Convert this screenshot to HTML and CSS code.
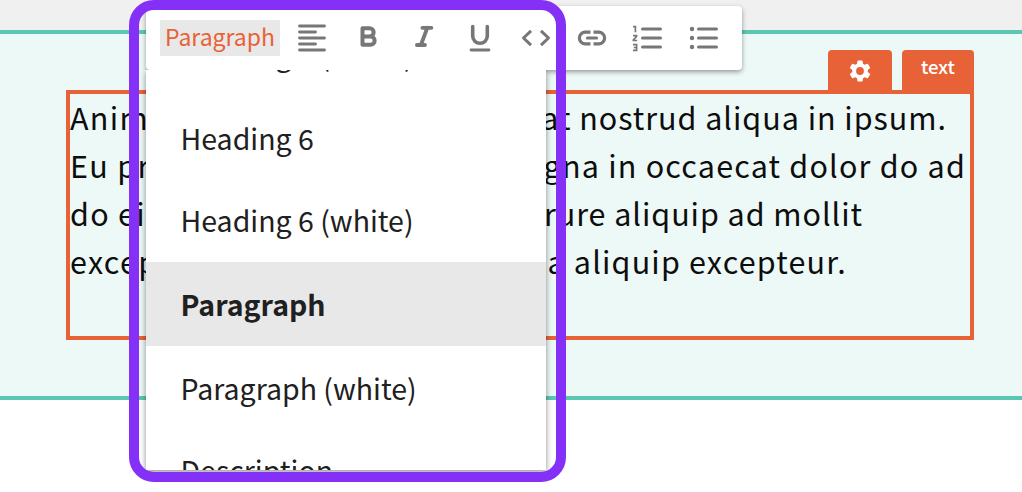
FILE: index.html
```html
<!DOCTYPE html>
<html lang="en">
<head>
<meta charset="utf-8">
<title>Text editor</title>
<link rel="stylesheet" href="styles.css">
</head>
<body>
<main class="page">
  <section class="section">
    <div class="tabs">
      <div class="tab tab-settings">
        <svg width="26" height="26" viewBox="0 0 24 24" fill="#fff"><path d="M19.14 12.94c.04-.3.06-.61.06-.94s-.02-.64-.07-.94l2.03-1.58a.49.49 0 0 0 .12-.61l-1.92-3.32a.49.49 0 0 0-.59-.22l-2.39.96a7 7 0 0 0-1.62-.94l-.36-2.54a.48.48 0 0 0-.48-.41h-3.84a.47.47 0 0 0-.47.41l-.36 2.54c-.59.24-1.13.57-1.62.94l-2.39-.96a.48.48 0 0 0-.59.22L2.74 8.87a.47.47 0 0 0 .12.61l2.03 1.58a6 6 0 0 0 0 1.88l-2.03 1.58a.49.49 0 0 0-.12.61l1.92 3.32c.12.22.37.29.59.22l2.39-.96c.5.38 1.03.7 1.62.94l.36 2.54c.05.24.24.41.48.41h3.84c.24 0 .44-.17.47-.41l.36-2.54c.59-.24 1.13-.56 1.62-.94l2.39.96c.22.08.47 0 .59-.22l1.92-3.32a.47.47 0 0 0-.12-.61zM12 15.6a3.6 3.6 0 1 1 0-7.2 3.6 3.6 0 0 1 0 7.2z"/></svg>
      </div>
      <div class="tab tab-text">text</div>
    </div>
    <div class="block">
      <div class="line line-1"><span>Anim</span><span class="rest">at nostrud aliqua in ipsum.</span></div>
      <div class="line line-2"><span>Eu pr</span><span class="rest">gna in occaecat dolor do ad</span></div>
      <div class="line line-3"><span>do ei</span><span class="rest">rure aliquip ad mollit</span></div>
      <div class="line line-4"><span>excep</span><span class="rest">a aliquip excepteur.</span></div>
    </div>
  </section>

  <div class="editor">
    <div class="toolbar">
      <span class="format">Paragraph</span>
      <div class="tools">
        <svg class="tool" viewBox="0 0 56 64" stroke-width="2.8"><path d="M15.500 20h25M15.500 26h16M15.500 32h25M15.500 38h16M15.500 44h25"/></svg>
        <svg class="tool" viewBox="0 0 56 64" stroke-width="4"><path d="M22.500 22.200h7a4 4 0 0 1 0 8.300h-7zM22.500 30.500h8a4.100 4.100 0 0 1 0 8.300h-8z"/></svg>
        <svg class="tool" viewBox="0 0 56 64" stroke-width="3.800"><path d="M26.400 21.800h9M20.900 39h8.100M31.300 21.800l-6.400 17.200"/></svg>
        <svg class="tool" viewBox="0 0 56 64" stroke-width="3.600"><path d="M20.700 20.500v9.500a7.300 7.300 0 0 0 14.600 0v-9.500"/><path stroke-width="2.800" d="M19 44h18"/></svg>
        <svg class="tool" viewBox="0 0 56 64" stroke-width="3"><path stroke-linecap="butt" d="M23 24.800L15.500 32l7.500 7.200M33 24.800l7.500 7.200-7.500 7.200"/></svg>
        <svg class="tool" viewBox="0 0 56 64" stroke-width="3.200"><path stroke-linecap="butt" d="M26.500 26.200h-5.300a5.800 5.800 0 0 0 0 11.600h5.300M29.500 26.200h5.300a5.800 5.800 0 0 1 0 11.600h-5.300"/><path d="M23.500 32h9"/></svg>
        <svg class="tool" viewBox="0 0 56 64" stroke-width="3"><path d="M22.500 23h18M22.500 32h18M22.500 41h18"/><path stroke-width="1.700" stroke-linecap="butt" stroke-linejoin="miter" d="M13 20.700h2.400v5.600M13 29.700h3.600v.8l-3.200 3.400v.6h3.800M13 38.700h3.600v5.600H13M13.800 41.500h2.800"/></svg>
        <svg class="tool" viewBox="0 0 56 64" stroke-width="3"><path d="M22.500 23h18M22.500 32h18M22.500 41h18"/><path stroke-width="4.400" d="M16 23h.01M16 32h.01M16 41h.01"/></svg>
      </div>
    </div>
    <div class="menu">
      <div class="item item-cut">Heading 5 (white)</div>
      <div class="item">Heading 6</div>
      <div class="item">Heading 6 (white)</div>
      <div class="item item-selected">Paragraph</div>
      <div class="item item-tall">Paragraph (white)</div>
      <div class="item">Description</div>
    </div>
  </div>
  <div class="highlight"></div>
</main>
</body>
</html>
```
FILE: styles.css
```css
* { box-sizing: border-box; }
body { margin: 0; font-family: "Noto Sans CJK SC", "Noto Sans", sans-serif; }
.page {
  position: relative;
  width: 1022px;
  height: 492px;
  padding-top: 30px;
  overflow: hidden;
  background: linear-gradient(#f0f0f0 0 30px, #fff 30px);
}
.section {
  height: 370px;
  padding: 16px 48px 0 66px;
  border-top: 4px solid #5ac7b0;
  border-bottom: 4px solid #5ac7b0;
  background: #edf9f7;
}
.tabs { display: flex; justify-content: flex-end; gap: 10px; }
.tab {
  display: flex;
  justify-content: center;
  height: 40px;
  border-radius: 4px 4px 0 0;
  background: #e86237;
  color: #fff;
}
.tab-settings { width: 64px; padding-top: 8px; }
.tab-text { width: 72px; font-size: 18.5px; font-weight: 500; line-height: 33px; }
.block {
  height: 250px;
  border: 4px solid #e86237;
  color: #0d0d0d;
  font-size: 30.5px;
  line-height: 46px;
}
.line {
  display: flex;
  justify-content: space-between;
  height: 48px;
  white-space: pre;
  letter-spacing: 1.3px;
}
.line-1 { width: 877px; }
.line-2 { width: 896px; }
.line-3 { width: 793px; }
.line-4 { width: 777px; }
.line-1 .rest { letter-spacing: .97px; }
.line-2 .rest { letter-spacing: 1.2px; }
.line-3 .rest { letter-spacing: .95px; }
.line-4 .rest { letter-spacing: 1.18px; }

.editor { position: absolute; left: 146px; top: 6px; }
.toolbar {
  position: relative;
  z-index: 1;
  display: flex;
  align-items: center;
  width: 596px;
  height: 64px;
  padding-left: 14px;
  border-radius: 4px;
  background: #fff;
  box-shadow: 0 2px 5px rgba(0, 0, 0, .38);
  clip-path: polygon(-10px -10px, 606px -10px, 606px 74px, 400px 74px, 400px 64px, -10px 64px);
}
.format {
  width: 120px;
  height: 36px;
  background: #e8e8e8;
  color: #e86237;
  font-size: 23px;
  line-height: 33px;
  text-align: center;
}
.tools { display: flex; margin-left: 4px; }
.tool {
  width: 56px;
  height: 64px;
  fill: none;
  stroke: #777;
  stroke-linecap: round;
  stroke-linejoin: round;
}
.menu {
  width: 400px;
  height: 400px;
  overflow: hidden;
  background: #fff;
  box-shadow: 0 2px 6px rgba(0, 0, 0, .45);
  color: #202020;
  font-size: 28.5px;
}
.item { height: 82px; padding-left: 34.5px; line-height: 80px; white-space: nowrap; }
.item-cut { height: 84px; margin-top: -56px; }
.item-selected { height: 84px; line-height: 84px; background: #e8e8e8; font-weight: 700; }
.item-tall { height: 84px; line-height: 84px; }
.highlight {
  position: absolute;
  left: 129px;
  top: 0;
  z-index: 2;
  width: 437px;
  height: 482px;
  border: 10px solid #8430f7;
  border-radius: 25px;
}
```
